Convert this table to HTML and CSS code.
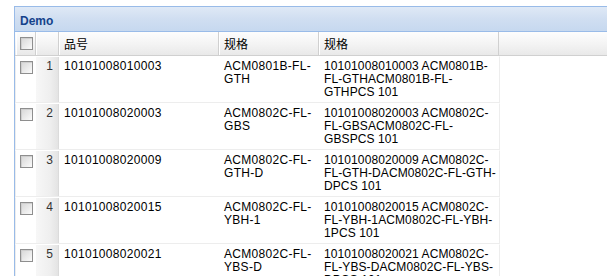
FILE: index.html
```html
<!DOCTYPE html>
<html>
<head>
<meta charset="utf-8">
<link rel="stylesheet" href="styles.css">
</head>
<body>
<div class="panel">
  <div class="panel-header"><span class="title">Demo</span></div>
  <div class="panel-body">
    <div class="grid-header">
      <div class="hd c-check"><span class="cb"></span></div>
      <div class="hd c-num"></div>
      <div class="hd c1">品号</div>
      <div class="hd c2">规格</div>
      <div class="hd c3">规格</div>
    </div>
    <div class="grid-body">
      <div class="row">
        <div class="cell c-check"><span class="cb"></span></div>
        <div class="cell c-num">1</div>
        <div class="cell c1">10101008010003</div>
        <div class="cell c2">ACM0801B-FL-<br>GTH</div>
        <div class="cell c3">10101008010003 ACM0801B-<br>FL-GTHACM0801B-FL-<br>GTHPCS 101</div>
      </div>
      <div class="row">
        <div class="cell c-check"><span class="cb"></span></div>
        <div class="cell c-num">2</div>
        <div class="cell c1">10101008020003</div>
        <div class="cell c2">ACM0802C-FL-<br>GBS</div>
        <div class="cell c3">10101008020003 ACM0802C-<br>FL-GBSACM0802C-FL-<br>GBSPCS 101</div>
      </div>
      <div class="row">
        <div class="cell c-check"><span class="cb"></span></div>
        <div class="cell c-num">3</div>
        <div class="cell c1">10101008020009</div>
        <div class="cell c2">ACM0802C-FL-<br>GTH-D</div>
        <div class="cell c3">10101008020009 ACM0802C-<br>FL-GTH-DACM0802C-FL-GTH-<br>DPCS 101</div>
      </div>
      <div class="row">
        <div class="cell c-check"><span class="cb"></span></div>
        <div class="cell c-num">4</div>
        <div class="cell c1">10101008020015</div>
        <div class="cell c2">ACM0802C-FL-<br>YBH-1</div>
        <div class="cell c3">10101008020015 ACM0802C-<br>FL-YBH-1ACM0802C-FL-YBH-<br>1PCS 101</div>
      </div>
      <div class="row">
        <div class="cell c-check"><span class="cb"></span></div>
        <div class="cell c-num">5</div>
        <div class="cell c1">10101008020021</div>
        <div class="cell c2">ACM0802C-FL-<br>YBS-D</div>
        <div class="cell c3">10101008020021 ACM0802C-<br>FL-YBS-DACM0802C-FL-YBS-<br>DPCS 101</div>
      </div>
    </div>
  </div>
</div>
</body>
</html>
```

FILE: styles.css
```css
html, body {
  margin: 0;
  padding: 0;
  background: #fff;
  overflow: hidden;
}
body {
  padding: 6px 0 0 14px;
  font-family: "Liberation Sans", Arial, "Noto Sans CJK SC", sans-serif;
}
.panel {
  width: 640px;
}
.panel-header {
  border: 1px solid #99bbe8;
  background: linear-gradient(#dfe9f6, #d0def1 50%, #c6d8ef);
  padding: 5px 3px 4px 5px;
  line-height: 15px;
  height: 15px;
}
.title {
  font: bold 12px "Liberation Sans", Arial, sans-serif;
  color: #15428b;
}
.panel-body {
  border-left: 1px solid #99bbe8;
  background: #fff;
  height: 300px;
}
.grid-header {
  display: flex;
  height: 23px;
  padding-left: 1px;
  border-bottom: 1px solid #d0d0d0;
  background: linear-gradient(#fdfdfd, #f4f4f4 50%, #e9e9e9);
}
.hd {
  box-sizing: border-box;
  height: 23px;
  padding: 4px 3px 4px 5px;
  line-height: 15px;
  font-size: 12px;
  font-family: "Noto Sans CJK SC", "Liberation Sans", sans-serif;
  color: #000;
  border-right: 1px solid #d0d0d0;
  box-shadow: inset 1px 0 #fff;
}
.c-check { width: 20px; flex: none; }
.c-num { width: 23px; flex: none; }
.c1 { width: 160px; flex: none; }
.c2 { width: 100px; flex: none; }
.c3 { width: 180px; flex: none; }
.hd.c-check { padding: 5px 0 0 4px; }
.cb {
  display: block;
  box-sizing: border-box;
  width: 13px;
  height: 13px;
  border: 1px solid #8e8e8e;
  background: linear-gradient(135deg, #d6d6d6, #ececec 60%, #fbfbfb);
  box-shadow: inset 1px 1px #cfcfcf;
}
.row {
  display: flex;
  width: 483px;
  border: 1px solid #ededed;
  border-top-color: #fff;
}
.cell {
  box-sizing: border-box;
  padding: 3px 3px 3px 5px;
  line-height: 13px;
  height: 45px;
  font-size: 12px;
  letter-spacing: 0.3px;
  color: #000;
  white-space: nowrap;
  overflow: hidden;
}
.cell.c3 {
  letter-spacing: 0.1px;
  padding-right: 0;
}
.cell.c-check {
  padding: 4px 0 0 4px;
}
.cell.c-num {
  text-align: right;
  padding-right: 6px;
  color: #333;
  letter-spacing: 0;
  background: linear-gradient(to right, #f7f7f7, #efefef 60%, #e4e4e4 95%, #d4d4d4);
}
```
